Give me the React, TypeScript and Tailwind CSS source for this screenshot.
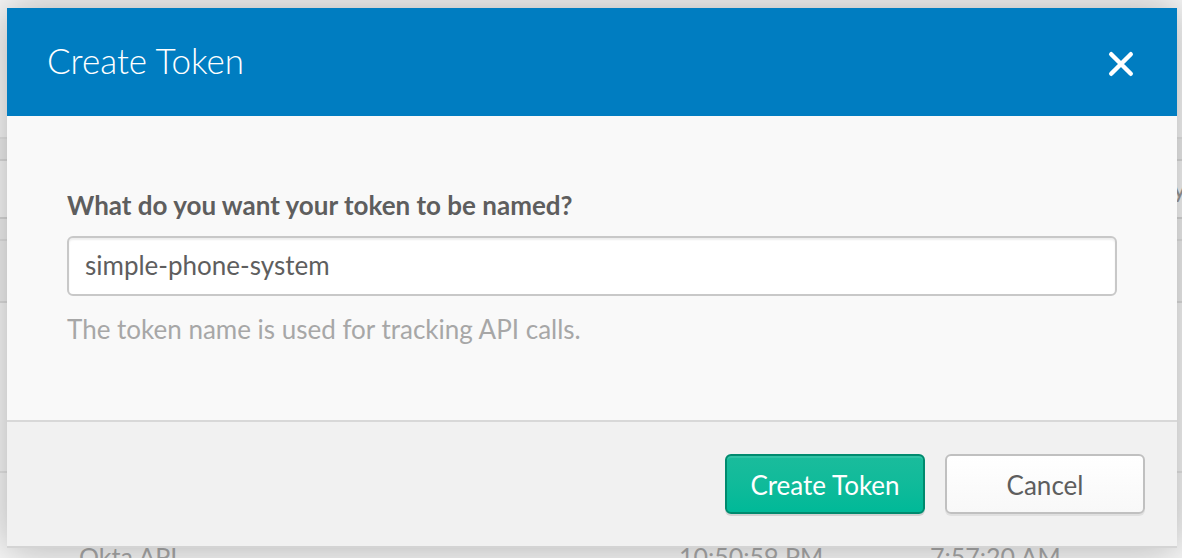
import { useState } from "react";

function PageBehind() {
  return (
    <div
      aria-hidden="true"
      className="col-start-1 row-start-1 flex h-0 min-h-full flex-col overflow-hidden bg-[#f7f7f7] text-[25px] text-[#a8a8a8]"
    >
      <div className="h-[139px] shrink-0 border-b-2 border-[#e6e6e6]" />
      <div className="h-[22px] shrink-0 border-b-2 border-[#dcdcdc] bg-[#eeeeee]" />
      <div className="flex h-[58px] shrink-0 items-center justify-end border-b-2 border-[#d8d8d8]">
        <span className="-mr-1 text-[#999999]">y</span>
      </div>
      <div className="h-[22px] shrink-0 border-b-2 border-[#e2e2e2] bg-[#f0f0f0]" />
      <div className="h-[62px] shrink-0 border-b-2 border-[#dedede] bg-[#f0f0f0]" />
      <div className="h-[170px] shrink-0 border-b-2 border-[#e6e6e6]" />
      <div className="grid shrink-0 grid-cols-[600px_251px_1fr] pt-[67px] pl-[79px] leading-8">
        <span>Okta API</span>
        <span>10:50:59 PM</span>
        <span>7:57:20 AM</span>
      </div>
    </div>
  );
}

export default function App() {
  const [name, setName] = useState("simple-phone-system");

  return (
    <div className="grid min-h-screen overflow-hidden font-['Lato',sans-serif]">
      <PageBehind />
      <section
        role="dialog"
        aria-labelledby="dialog-title"
        className="relative col-start-1 row-start-1 mt-2 mr-[5px] mb-2.5 ml-[7px] self-start border-b-2 border-[#d4d4d4] bg-[#f9f9f9] shadow-[0_0_40px_rgba(0,0,0,0.3)]"
      >
        <header className="flex h-[108px] items-center justify-between bg-[#007dc1] pr-[43px] pl-10 text-white">
          <h1 id="dialog-title" className="pb-1 text-[35px] leading-10 font-light">
            Create Token
          </h1>
          <button type="button" aria-label="Close" className="mt-1">
            <svg viewBox="0 0 26 26" className="size-[26px]" fill="none" stroke="currentColor" strokeWidth="4.4" strokeLinecap="round">
              <path d="M3.2 3.2l19.6 19.6M22.8 3.2L3.2 22.8" />
            </svg>
          </button>
        </header>

        <div className="flex flex-col px-[60px] pt-[71px] pb-[73px]">
          <label htmlFor="token-name" className="text-[26px] leading-9 font-bold text-[#5e5e5e]">
            What do you want your token to be named?
          </label>
          <input
            id="token-name"
            type="text"
            value={name}
            onChange={(e) => setName(e.target.value)}
            className="mt-[13px] h-[60px] w-full rounded-md border-2 border-[#c8c8c8] bg-white px-4 pb-0.5 text-[26px] text-[#5e5e5e] shadow-[inset_0_2px_2px_#eeeeee] outline-none"
          />
          <p className="mt-[15px] text-[26px] leading-9 text-[#a7a7a7]">The token name is used for tracking API calls.</p>
        </div>

        <footer className="flex justify-end gap-5 border-t-2 border-[#d8d8d8] bg-[#f1f1f1] px-8 py-8 text-[26px]">
          <button
            type="button"
            className="h-[60px] w-[200px] rounded-md border-2 border-[#008a6e] bg-linear-to-b from-[#1abc9c] to-[#00b998] pt-0.5 text-white shadow-[0_2px_0_#d2d2d2,inset_0_2px_0_#31c3a6]"
          >
            Create Token
          </button>
          <button
            type="button"
            className="h-[60px] w-[200px] rounded-md border-2 border-[#c0c0c0] bg-linear-to-b from-white to-[#f8f8f8] pt-0.5 text-[#5e5e5e] shadow-[0_2px_0_#e0e0e0]"
          >
            Cancel
          </button>
        </footer>
      </section>
    </div>
  );
}
